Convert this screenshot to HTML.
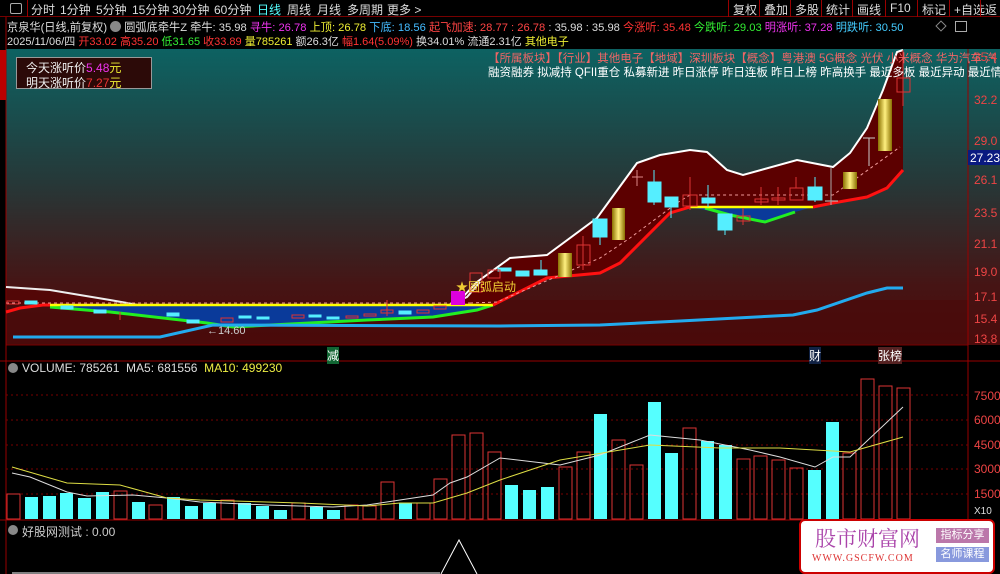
<!DOCTYPE html>
<html><head><meta charset="utf-8">
<style>
*{margin:0;padding:0;box-sizing:border-box}
body{width:1000px;height:574px;background:#000;overflow:hidden;font-family:"Liberation Sans","Noto Sans CJK SC",sans-serif;position:relative;font-size:12px;color:#ddd}
.a{position:absolute;white-space:nowrap}
#tb{position:absolute;left:0;top:0;width:1000px;height:17px;border-bottom:1px solid #700}
#tb span{position:absolute;top:1px;font-size:12px;color:#ddd}
.rb{position:absolute;top:0;height:17px;border-left:1px solid #900;color:#ddd;font-size:12px;padding:1px 4px}
</style></head><body>
<div id="tb">
<div class="a" style="left:10px;top:3px;width:12px;height:11px;border:1px solid #aaa;border-radius:2px"></div>
<div class="a" style="left:6px;top:0;width:22px;height:17px;border-right:1px solid #900"></div>
<span style="left:31px">分时</span><span style="left:60px">1分钟</span><span style="left:96px">5分钟</span><span style="left:132px">15分钟</span><span style="left:172px">30分钟</span><span style="left:214px">60分钟</span><span style="left:257px;color:#5ff">日线</span><span style="left:287px">周线</span><span style="left:317px">月线</span><span style="left:347px">多周期</span><span style="left:387px">更多 &gt;</span>
<div class="rb" style="left:728px">复权</div><div class="rb" style="left:759px">叠加</div><div class="rb" style="left:790px">多股</div><div class="rb" style="left:821px">统计</div><div class="rb" style="left:852px">画线</div><div class="rb" style="left:885px">F10</div><div class="rb" style="left:917px">标记</div><div class="rb" style="left:949px">+自选</div><div class="rb" style="left:980px">返</div>
</div>
<div class="a" style="left:7px;top:19px;font-size:11.2px;color:#ddd">京泉华(日线,前复权) <span style="display:inline-block;width:11px;height:11px;border-radius:6px;background:#888;vertical-align:-1px"></span> 圆弧底牵牛Z 牵牛: 35.98 <span style="color:#e3e">寻牛: 26.78</span> <span style="color:#ee3">上顶: 26.78</span> <span style="color:#4bf">下底: 18.56</span> <span style="color:#f44">起飞加速: 28.77 : 26.78</span> : 35.98 : 35.98 <span style="color:#f33">今涨听: 35.48</span> <span style="color:#3e3">今跌听: 29.03</span> <span style="color:#e3e">明涨听: 37.28</span> <span style="color:#4cf">明跌听: 30.50</span></div>
<div class="a" style="left:7px;top:33px;font-size:11px;color:#ddd">2025/11/06/四 <span style="color:#f33">开33.02 高35.20</span> <span style="color:#3e3">低31.65</span> <span style="color:#f33">收33.89</span> <span style="color:#ee3">量785261</span> 额26.3亿 <span style="color:#f33">幅1.64(5.09%)</span> 换34.01% 流通2.31亿 <span style="color:#ee3">其他电子</span></div>
<div class="a" style="left:937px;top:22px;width:8px;height:8px;border:1px solid #888;transform:rotate(45deg)"></div>
<div class="a" style="left:955px;top:21px;width:12px;height:11px;border:1px solid #aaa"></div>

<svg class="a" style="left:0;top:0" width="1000" height="574">
<defs>
<linearGradient id="bg" x1="0" y1="0" x2="0" y2="1">
<stop offset="0" stop-color="#0d6262"/><stop offset="0.45" stop-color="#263838"/><stop offset="0.8" stop-color="#461414"/><stop offset="1" stop-color="#4a0c0c"/></linearGradient>
<linearGradient id="gd" x1="0" y1="0" x2="1" y2="0"><stop offset="0" stop-color="#8a7000"/><stop offset="0.5" stop-color="#fff080"/><stop offset="1" stop-color="#8a7000"/></linearGradient>
</defs>
<rect x="6" y="49" width="994" height="296" fill="url(#bg)"/>
<rect x="6" y="300" width="962" height="45" fill="#4a0a0a" opacity="0.7"/>
<line x1="6" y1="345" x2="968" y2="345" stroke="#700"/>
<line x1="0" y1="361" x2="1000" y2="361" stroke="#900"/>
<line x1="968" y1="49" x2="968" y2="574" stroke="#900"/>
<line x1="0" y1="520" x2="968" y2="520" stroke="#900"/>
<line x1="6" y1="17" x2="6" y2="574" stroke="#900"/>
<rect x="0" y="50" width="6" height="50" fill="#b00"/>
<polygon points="6,287 50,290 110,300 200,316 330,322 433,312 467,297 500,265 500,305 6,305" fill="#5c0000" opacity="0.6"/>
<polygon points="460,300 477,282 510,258 547,255 597,218 637,163 660,155 690,150 707,152 727,170 743,175 797,160 833,167 850,153 867,128 883,90 897,52 903,50 903,170 887,188 867,197 833,203 813,207 690,207 670,213 620,263 600,273 547,278 493,305 460,305" fill="#5c0000"/>
<polyline points="460,300 477,282 510,258 547,255 597,218 637,163 660,155 690,150 707,152 727,170 743,175 797,160 833,167 850,153 867,128 883,90 897,52 903,50" fill="none" stroke="#fff" stroke-width="2"/>
<polyline points="6,287 50,290 110,300 200,316 330,322 433,312 467,297 480,282" fill="none" stroke="#eee" stroke-width="2"/>
<polygon points="50,305 493,305 477,310 433,317 367,320 233,327 207,323 110,312 50,307" fill="#0a3a9a"/>
<polygon points="690,207 813,207 795,212 765,222 730,215" fill="#0a3a9a"/>
<polyline points="50,307 110,312 207,323 233,327 367,320 433,317 477,310 493,305" fill="none" stroke="#2e2" stroke-width="3"/>
<polyline points="705,208 730,215 765,222 795,212" fill="none" stroke="#2e2" stroke-width="3"/>
<line x1="50" y1="305" x2="493" y2="305" stroke="#ff0" stroke-width="2.5"/>
<line x1="690" y1="207" x2="813" y2="207" stroke="#ff0" stroke-width="2.5"/>
<polyline points="6,312 20,308 43,305 50,305" fill="none" stroke="#f11" stroke-width="3"/>
<polyline points="493,305 547,278 600,273 620,263 670,213 690,207" fill="none" stroke="#f11" stroke-width="3"/>
<polyline points="813,207 833,203 867,197 887,188 903,170" fill="none" stroke="#f11" stroke-width="3"/>
<polyline points="6,303 470,303" fill="none" stroke="#e99" stroke-dasharray="3,3"/>
<polyline points="470,303 497,302 600,258 630,238 677,203 690,195 833,195 900,147" fill="none" stroke="#e99" stroke-dasharray="3,3"/>
<polyline points="13,337 160,337 213,325 500,326 600,325 680,321 793,315 817,310 867,293 887,288 903,288" fill="none" stroke="#2ae" stroke-width="3"/>
<g fill="#5ef" stroke="#5ef">
<rect x="25" y="301" width="12" height="3"/><rect x="61" y="306" width="12" height="3"/><rect x="94" y="310" width="12" height="3"/><rect x="167" y="313" width="12" height="3"/><rect x="187" y="320" width="12" height="3"/><rect x="239" y="316" width="12" height="2"/><rect x="257" y="317" width="12" height="2"/><rect x="309" y="315" width="12" height="2"/><rect x="327" y="317" width="12" height="2"/><rect x="399" y="311" width="12" height="3"/>
<rect x="498" y="268" width="13" height="3"/><rect x="516" y="271" width="13" height="5"/><rect x="534" y="270" width="13" height="5"/>
<rect x="593" y="219" width="14" height="18"/><rect x="648" y="182" width="13" height="20"/><rect x="665" y="197" width="13" height="10"/><rect x="702" y="198" width="13" height="5"/><rect x="718" y="214" width="14" height="16"/><rect x="808" y="187" width="14" height="13"/>
</g>
<g stroke="#5ef"><line x1="541" y1="260" x2="541" y2="275"/><line x1="600" y1="237" x2="600" y2="245"/><line x1="654" y1="170" x2="654" y2="205"/><line x1="671" y1="207" x2="671" y2="218"/><line x1="708" y1="185" x2="708" y2="207"/><line x1="725" y1="230" x2="725" y2="235"/><line x1="815" y1="177" x2="815" y2="202"/></g>
<g fill="none" stroke="#d33">
<rect x="7" y="301" width="12" height="3"/><rect x="221" y="318" width="12" height="4"/><rect x="292" y="315" width="12" height="3"/><rect x="346" y="316" width="12" height="2"/><rect x="364" y="314" width="12" height="2"/><rect x="381" y="310" width="12" height="3"/><rect x="417" y="310" width="12" height="3"/><rect x="434" y="306" width="12" height="3"/>
<rect x="470" y="273" width="12" height="19"/><rect x="488" y="270" width="12" height="8"/><rect x="577" y="245" width="13" height="20"/><rect x="683" y="195" width="14" height="11"/><rect x="737" y="216" width="13" height="5"/><rect x="755" y="199" width="13" height="3"/><rect x="772" y="198" width="13" height="2"/><rect x="790" y="188" width="13" height="12"/><rect x="897" y="78" width="13" height="14"/>
<line x1="690" y1="177" x2="690" y2="210"/><line x1="743" y1="208" x2="743" y2="225"/><line x1="761" y1="187" x2="761" y2="205"/><line x1="778" y1="187" x2="778" y2="205"/><line x1="796" y1="177" x2="796" y2="188"/><line x1="903" y1="50" x2="903" y2="106"/><line x1="583" y1="236" x2="583" y2="270"/><line x1="120" y1="312" x2="120" y2="320"/><line x1="387" y1="300" x2="387" y2="316"/>
</g>
<line x1="632" y1="177" x2="643" y2="177" stroke="#d88"/><line x1="637" y1="170" x2="637" y2="186" stroke="#d88"/>
<line x1="825" y1="201" x2="838" y2="201" stroke="#ccc"/><line x1="831" y1="167" x2="831" y2="205" stroke="#aaa"/>
<line x1="863" y1="138" x2="875" y2="138" stroke="#ccc"/><line x1="869" y1="138" x2="869" y2="166" stroke="#ccc"/>
<rect x="558" y="253" width="14" height="24" fill="url(#gd)"/><rect x="612" y="208" width="13" height="32" fill="url(#gd)"/><rect x="843" y="172" width="14" height="17" fill="url(#gd)"/><rect x="878" y="99" width="14" height="52" fill="url(#gd)"/>
<rect x="451" y="291" width="14" height="14" fill="#d0d"/>
<g fill="#e44" font-size="12" font-family="Liberation Sans">
<text x="974" y="61">35.4</text><text x="974" y="104">32.2</text><text x="974" y="145">29.0</text><text x="974" y="184">26.1</text><text x="974" y="217">23.5</text><text x="974" y="248">21.1</text><text x="974" y="276">19.0</text><text x="974" y="301">17.1</text><text x="974" y="323">15.4</text><text x="974" y="343">13.8</text>
<text x="974" y="400">7500</text><text x="974" y="424">6000</text><text x="974" y="449">4500</text><text x="974" y="473">3000</text><text x="974" y="498">1500</text><text x="974" y="514" fill="#ddd" font-size="10">X10</text>
</g>
<rect x="968" y="150" width="32" height="15" fill="#0a1a80"/><text x="970" y="162" fill="#fff" font-size="12" font-family="Liberation Sans">27.23</text>
<g stroke="#700" stroke-dasharray="2,3"><line x1="6" y1="395" x2="968" y2="395"/><line x1="6" y1="420" x2="968" y2="420"/><line x1="6" y1="445" x2="968" y2="445"/><line x1="6" y1="469" x2="968" y2="469"/><line x1="6" y1="494" x2="968" y2="494"/></g>
<g fill="#5ff">
<rect x="25" y="497" width="13" height="22"/><rect x="43" y="496" width="13" height="23"/><rect x="60" y="493" width="13" height="26"/><rect x="78" y="498" width="13" height="21"/><rect x="96" y="492" width="13" height="27"/><rect x="132" y="502" width="13" height="17"/><rect x="167" y="497" width="13" height="22"/><rect x="185" y="506" width="13" height="13"/><rect x="203" y="503" width="13" height="16"/><rect x="238" y="503" width="13" height="16"/><rect x="256" y="506" width="13" height="13"/><rect x="274" y="510" width="13" height="9"/><rect x="310" y="507" width="13" height="12"/><rect x="327" y="510" width="13" height="9"/><rect x="399" y="503" width="13" height="16"/>
<rect x="505" y="485" width="13" height="34"/><rect x="523" y="490" width="13" height="29"/><rect x="541" y="487" width="13" height="32"/><rect x="594" y="414" width="13" height="105"/><rect x="648" y="402" width="13" height="117"/><rect x="665" y="453" width="13" height="66"/><rect x="701" y="441" width="13" height="78"/><rect x="719" y="445" width="13" height="74"/><rect x="808" y="470" width="13" height="49"/><rect x="826" y="422" width="13" height="97"/>
</g>
<g fill="none" stroke="#d33">
<rect x="7" y="494" width="13" height="25"/><rect x="114" y="491" width="13" height="28"/><rect x="149" y="505" width="13" height="14"/><rect x="221" y="500" width="13" height="19"/><rect x="292" y="503" width="13" height="16"/><rect x="345" y="505" width="13" height="14"/><rect x="363" y="506" width="13" height="13"/><rect x="381" y="482" width="13" height="37"/><rect x="417" y="503" width="13" height="16"/><rect x="434" y="479" width="13" height="40"/><rect x="452" y="435" width="13" height="84"/><rect x="470" y="433" width="13" height="86"/><rect x="488" y="452" width="13" height="67"/>
<rect x="559" y="467" width="13" height="52"/><rect x="577" y="452" width="13" height="67"/><rect x="612" y="440" width="13" height="79"/><rect x="630" y="465" width="13" height="54"/><rect x="683" y="428" width="13" height="91"/><rect x="737" y="459" width="13" height="60"/><rect x="754" y="456" width="13" height="63"/><rect x="772" y="460" width="13" height="59"/><rect x="790" y="468" width="13" height="51"/><rect x="843" y="453" width="13" height="66"/><rect x="861" y="379" width="13" height="140"/><rect x="879" y="386" width="13" height="133"/><rect x="897" y="388" width="13" height="131"/>
</g>
<polyline points="12,473 30,477 67,492 87,496 133,495 167,498 200,502 267,505 333,507 367,505 400,500 433,495 450,483 467,477 500,458 560,465 600,455 650,435 700,440 750,450 780,457 815,467 833,457 850,457 903,407" fill="none" stroke="#ddd"/>
<polyline points="12,467 67,483 120,485 167,498 200,500 300,503 367,506 400,503 433,503 467,493 500,480 560,460 650,445 720,448 780,448 850,452 903,437" fill="none" stroke="#dd4"/>
<polyline points="441,574 459,540 477,574" fill="none" stroke="#fff"/>
<line x1="12" y1="573" x2="440" y2="573" stroke="#fff"/>
<circle cx="13" cy="368" r="5" fill="#888"/><circle cx="13" cy="530" r="5" fill="#888"/>
</svg>
<div class="a" style="left:16px;top:57px;width:136px;height:32px;background:#2c0a08;border:1px solid #999"></div>
<div class="a" style="left:26px;top:59px;font-size:12px;color:#eee">今天涨听价<span style="color:#e3e">5.48</span><span style="color:#ee3">元</span></div>
<div class="a" style="left:26px;top:74px;font-size:12px;color:#eee">明天涨听价<span style="color:#e33">7.27</span><span style="color:#ee3">元</span></div>
<div class="a" style="left:488px;top:50px;font-size:11.5px;color:#e66">【所属板块】【行业】其他电子【地域】深圳板块【概念】粤港澳 5G概念 光伏 小米概念 华为汽车 汽</div>
<div class="a" style="left:488px;top:64px;font-size:11.5px;color:#fff">融资融券 拟减持 QFII重仓 私募新进 昨日涨停 昨日连板 昨日上榜 昨高换手 最近多板 最近异动 最近情</div>
<div class="a" style="left:456px;top:278px;font-size:12px;color:#ec3">★圆弧启动</div>
<div class="a" style="left:207px;top:325px;font-size:11px;color:#ccc">←14.60</div>
<div class="a" style="left:327px;top:347px;font-size:12px;color:#fff;background:#163">减</div>
<div class="a" style="left:809px;top:347px;font-size:12px;color:#fff;background:#124">财</div>
<div class="a" style="left:878px;top:347px;font-size:12px;color:#fff;background:#522">张榜</div>
<div class="a" style="left:22px;top:361px;font-size:12px;color:#ddd">VOLUME: 785261&nbsp; MA5: 681556&nbsp; <span style="color:#ee4">MA10: 499230</span></div>
<div class="a" style="left:22px;top:523px;font-size:12px;color:#ccc">好股网测试 : 0.00</div>
<div class="a" style="left:799px;top:519px;width:196px;height:55px;background:#fff;border:2px solid #c00;border-radius:6px"></div>
<div class="a" style="left:815px;top:523px;font-size:21px;color:#a4a;font-family:'Noto Serif CJK SC',serif">股市财富网</div>
<div class="a" style="left:812px;top:553px;font-size:10px;color:#d33;font-family:'Liberation Serif',serif;letter-spacing:1px">WWW.GSCFW.COM</div>
<div class="a" style="left:936px;top:528px;width:53px;height:15px;background:#b7a;color:#fff;font-size:11px;text-align:center;line-height:15px">指标分享</div>
<div class="a" style="left:936px;top:547px;width:53px;height:15px;background:#89d;color:#fff;font-size:11px;text-align:center;line-height:15px">名师课程</div>
</body></html>
